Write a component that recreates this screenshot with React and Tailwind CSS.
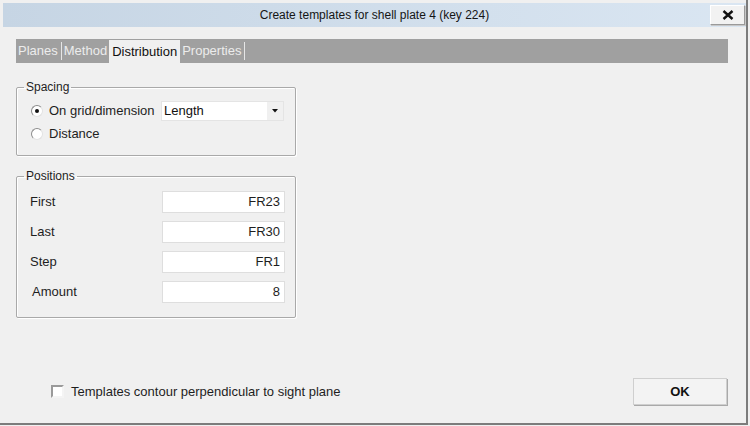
import React from 'react'

const font = { fontFamily: '"Liberation Sans", Arial, sans-serif' }

function Radio({ checked }) {
  return (
    <span className="w-[12px] h-[12px] rounded-full bg-white border border-t-[#8c8c8c] border-l-[#8c8c8c] border-b-[#e2e2e2] border-r-[#e2e2e2] flex items-center justify-center shrink-0">
      {checked && <span className="w-[4px] h-[4px] rounded-full bg-[#111]" />}
    </span>
  )
}

function Field({ label, value, indent }) {
  return (
    <div className="flex items-center h-[22px]">
      <span className={(indent ? 'pl-[15px] ' : 'pl-[13px] ') + 'w-[145px] text-[13px] text-[#1e1e1e]'}>{label}</span>
      <div className="w-[123px] h-[22px] bg-white border border-[#dedede] flex items-center justify-end pr-[4px] text-[13px] text-[#1e1e1e]">{value}</div>
    </div>
  )
}

export default function App() {
  const tabs = ['Planes', 'Method', 'Distribution', 'Properties']
  return (
    <div className="w-[750px] h-[426px] bg-[#f0f0f0] pr-[2px] pb-[1px] overflow-hidden" style={font}>
      <div className="h-full flex flex-col border-r-2 border-b-2 border-[#7c7c7c]">
        {/* title bar */}
        <div className="mt-[3px] ml-[3px] h-[24px] grid grid-cols-[1fr_auto_1fr] items-center bg-gradient-to-r from-[#c6d5e4] to-[#dae6f2]">
          <div />
          <div className="text-[12px] text-[#151515]">Create templates for shell plate 4 (key 224)</div>
          <div className="flex justify-end pr-[1px]">
            <button className="w-[35px] h-[20px] bg-[#f2f2f2] border border-t-white border-l-white border-b-[#9a9a9a] border-r-[#9a9a9a] shadow-[1px_1px_0_#c8c8c8] flex items-center justify-center">
              <svg width="12" height="10" viewBox="0 0 12 10">
                <path d="M1.5 1 L10.5 9 M10.5 1 L1.5 9" stroke="#111" strokeWidth="2.4" />
              </svg>
            </button>
          </div>
        </div>

        {/* tabs */}
        <div className="mt-[12px] ml-[16px] w-[712px] h-[24px] bg-[#a0a0a0] flex items-stretch">
          {tabs.map(t =>
            t === 'Distribution' ? (
              <div key={t} className="mt-[1px] px-[3px] bg-[#f0f0f0] flex items-center text-[13px] text-[#111]">{t}</div>
            ) : (
              <div key={t} className="flex items-center">
                <span className="px-[2px] text-[13px] text-[#ececec]">{t}</span>
                {t !== 'Method' && <span className="ml-[1px] w-px h-[18px] bg-[#e6e6e6]" />}
              </div>
            )
          )}
        </div>

        <div className="pl-[16px] pt-[17px] flex flex-col">
          {/* Spacing */}
          <fieldset className="w-[280px] border border-[#a9a9a9] rounded-[2px] shadow-[inset_1px_1px_0_#fff,1px_1px_0_#fff] pb-[11px]">
            <legend className="ml-[7px] px-[2px] text-[12px] leading-[14px] text-[#1e1e1e]">Spacing</legend>
            <div className="pl-[14px] flex items-center h-[20px] mt-[7px]">
              <Radio checked />
              <span className="ml-[6px] w-[112px] text-[13px] text-[#1e1e1e]">On grid/dimension</span>
              <div className="w-[123px] h-[20px] bg-white border border-[#e4e4e4] flex items-center">
                <span className="flex-1 pl-[2px] text-[13px] text-[#111]">Length</span>
                <span className="w-[16px] h-full bg-[#f0f0f0] flex items-center justify-center">
                  <svg width="6" height="4" viewBox="0 0 6 4"><path d="M0 0 H6 L3 3.5 Z" fill="#111" /></svg>
                </span>
              </div>
            </div>
            <div className="pl-[14px] flex items-center h-[20px] mt-[3px]">
              <Radio />
              <span className="ml-[6px] text-[13px] text-[#1e1e1e]">Distance</span>
            </div>
          </fieldset>

          {/* Positions */}
          <fieldset className="mt-[13px] w-[280px] border border-[#a9a9a9] rounded-[2px] shadow-[inset_1px_1px_0_#fff,1px_1px_0_#fff] pb-[14px]">
            <legend className="ml-[7px] px-[2px] text-[12px] leading-[14px] text-[#1e1e1e]">Positions</legend>
            <div className="mt-[8px] flex flex-col gap-[8px]">
              <Field label="First" value="FR23" />
              <Field label="Last" value="FR30" />
              <Field label="Step" value="FR1" />
              <Field label="Amount" value="8" indent />
            </div>
          </fieldset>
        </div>

        <div className="flex-1" />

        {/* footer */}
        <div className="flex items-center justify-between pl-[51px] pr-[19px] pb-[18px]">
          <label className="flex items-center gap-[7px] text-[13px] text-[#1e1e1e]">
            <span className="w-[13px] h-[13px] bg-white border-2 border-t-[#9a9a9a] border-l-[#9a9a9a] border-b-[#f4f4f4] border-r-[#f4f4f4]" />
            Templates contour perpendicular to sight plane
          </label>
          <button className="w-[94px] h-[27px] bg-[#f3f3f3] border border-[#cfcfcf] shadow-[1px_1px_0_#a9a9a9] text-[13px] font-bold text-[#111]">OK</button>
        </div>
      </div>
    </div>
  )
}
